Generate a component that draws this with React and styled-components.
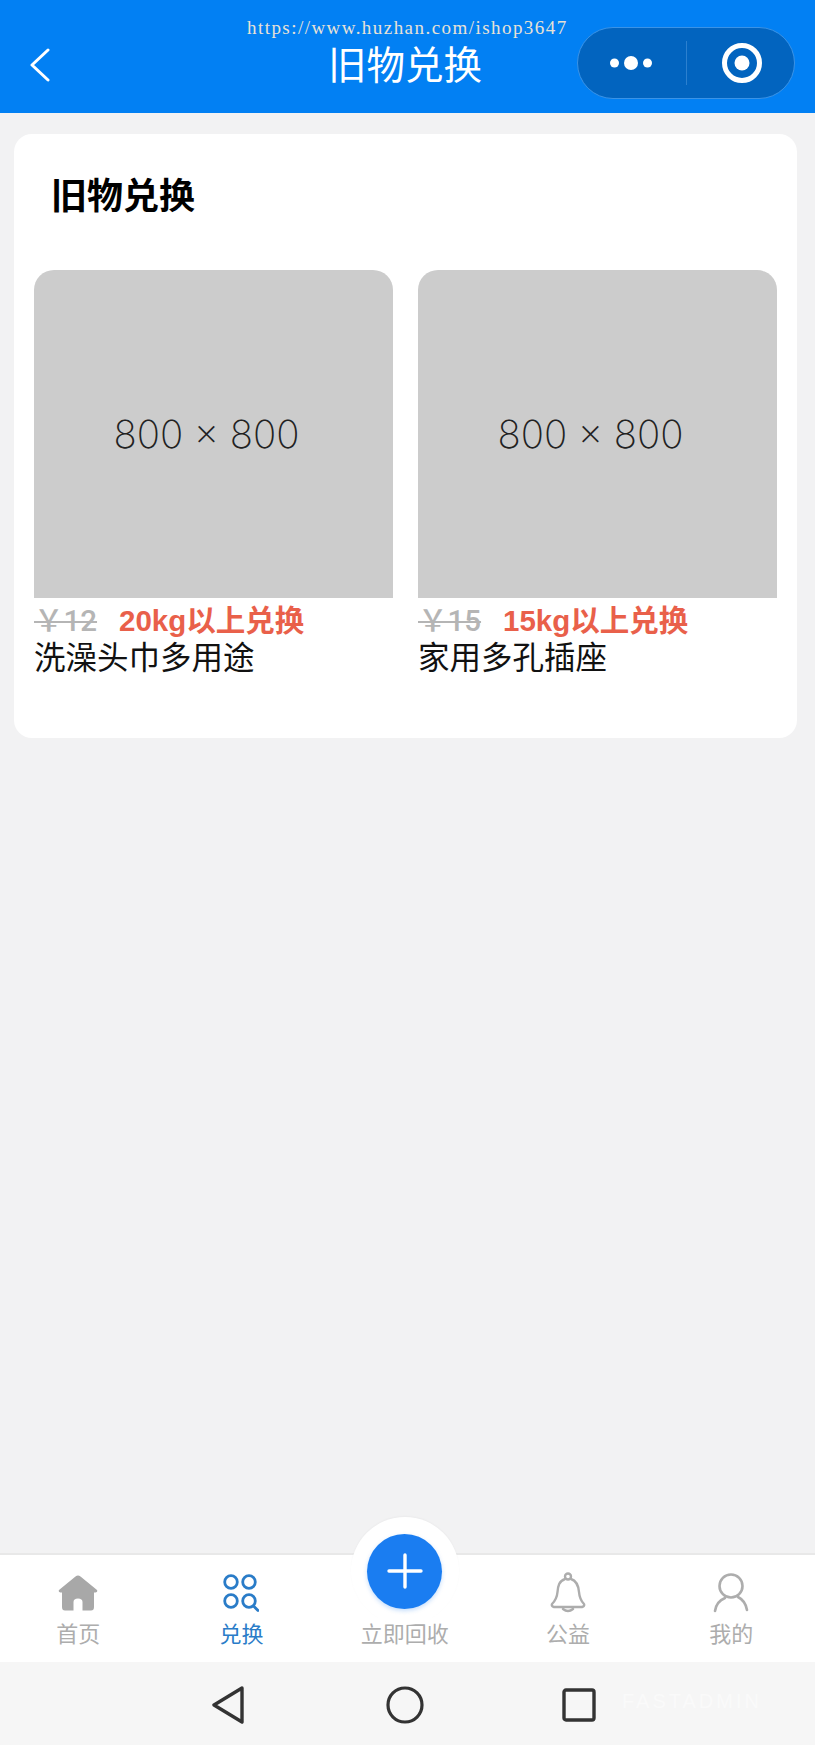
import React from "react";
import styled, { createGlobalStyle } from "styled-components";

const CJK = `"Noto Sans CJK SC", "Noto Sans", sans-serif`;

const GlobalStyle = createGlobalStyle`
  html, body {
    margin: 0;
    padding: 0;
    background: #f2f2f3;
  }
`;

const Page = styled.div`
  position: relative;
  width: 815px;
  height: 1745px;
  display: flex;
  flex-direction: column;
  overflow: hidden;
  font-family: ${CJK};
  background: #f2f2f3;
`;

const NavBar = styled.header`
  position: relative;
  flex: none;
  height: 113px;
  display: flex;
  align-items: center;
  justify-content: space-between;
  box-sizing: border-box;
  padding: 15px 20px 0 29px;
  background: #0280f3;
`;

const BackWrap = styled.div`
  display: flex;
  margin-top: 2px;
`;

const Watermark = styled.div`
  position: absolute;
  top: 17px;
  left: 247px;
  font-family: "Liberation Serif", serif;
  font-size: 19px;
  line-height: 22px;
  letter-spacing: 1.45px;
  white-space: nowrap;
  color: #e8e2d6;
`;

const NavTitle = styled.h1`
  position: absolute;
  left: 0;
  right: 5px;
  top: 40px;
  margin: 0;
  text-align: center;
  font-size: 38.5px;
  line-height: 44px;
  font-weight: 400;
  color: #fff;
`;

const Capsule = styled.div`
  width: 218px;
  height: 72px;
  margin-top: -2px;
  box-sizing: border-box;
  display: flex;
  align-items: center;
  border: 1.5px solid #3b93e6;
  border-radius: 36px;
  background: #0264bf;
`;

const CapsuleSide = styled.div`
  flex: 1;
  height: 44px;
  box-sizing: border-box;
  display: flex;
  align-items: center;
  justify-content: center;
  &:first-child {
    flex: none;
    width: 108px;
    padding-right: 3px;
  }
  & + & {
    border-left: 1.5px solid #2c80cf;
    padding-left: 3px;
  }
`;

const Main = styled.main`
  flex: 1;
  padding: 21px 18px 0 14px;
`;

const Card = styled.section`
  height: 604px;
  box-sizing: border-box;
  padding: 28px 20px 0;
  background: #fff;
  border-radius: 18px;
`;

const CardTitle = styled.h2`
  margin: 0 0 0 17px;
  height: 108px;
  font-size: 36px;
  line-height: 62px;
  font-weight: 700;
  color: #000;
`;

const Grid = styled.div`
  display: grid;
  grid-template-columns: 359px 359px;
  column-gap: 25px;
`;

const Placeholder = styled.div`
  height: 328px;
  display: flex;
  align-items: center;
  justify-content: center;
  padding-right: 14px;
  border-radius: 20px 20px 0 0;
  background: #cccccc;
  color: #222;
  font-family: Inter, "Liberation Sans", sans-serif;
  font-weight: 200;
  font-size: 38.5px;
`;

const PriceRow = styled.div`
  display: flex;
  align-items: center;
  gap: 22px;
  height: 36px;
  margin-top: 5px;
`;

const OldPrice = styled.s`
  font-family: Roboto, "Liberation Sans", ${CJK};
  font-size: 29.5px;
  line-height: 36px;
  font-weight: 500;
  color: #b5b5b5;
`;

const Points = styled.span`
  font-family: "Liberation Sans", ${CJK};
  font-size: 29.5px;
  line-height: 36px;
  font-weight: 700;
  color: #e9604a;
`;

const Name = styled.div`
  font-size: 31.5px;
  line-height: 32px;
  color: #111;
`;

const TabBar = styled.nav`
  position: relative;
  flex: none;
  height: 109px;
  box-sizing: border-box;
  display: grid;
  grid-template-columns: repeat(5, 163.3px);
  background: #fff;
  border-top: 2px solid #e8e8e8;
`;

const Tab = styled.div`
  position: relative;
  display: flex;
  flex-direction: column;
  align-items: center;
  justify-content: flex-end;
  padding: 0 7px 15px 0;
`;

const TabIcon = styled.div`
  height: 40px;
  margin-bottom: 4px;
  display: flex;
  align-items: center;
  justify-content: center;
`;

const TabLabel = styled.span`
  font-size: 22px;
  line-height: 30px;
  color: ${(p) => (p.$active ? "#2a7cc8" : "#adadad")};
`;

const FabHalo = styled.div`
  position: absolute;
  top: -38px;
  left: 50%;
  width: 108px;
  height: 108px;
  margin-left: -57.5px;
  display: flex;
  align-items: center;
  justify-content: center;
  border-radius: 50%;
  background: #fff;
  box-shadow: 0 -1px 2px rgba(0, 0, 0, 0.03);
`;

const Fab = styled.div`
  width: 75px;
  height: 75px;
  display: flex;
  align-items: center;
  justify-content: center;
  border-radius: 50%;
  background: #1a7df1;
  box-shadow: 0 2px 4px rgba(26, 125, 241, 0.25);
`;

const SystemBar = styled.div`
  position: relative;
  flex: none;
  height: 83px;
  box-sizing: border-box;
  padding: 3px 6px 0 0;
  display: flex;
  align-items: center;
  justify-content: center;
  background: #f6f6f6;
`;

const SystemSlot = styled.div`
  width: 174px;
  display: flex;
  justify-content: center;
`;

const BackTriangle = styled.svg`
  margin-right: 5px;
`;

const FaintMark = styled.span`
  position: absolute;
  left: 622px;
  top: 28px;
  font-family: "Liberation Sans", sans-serif;
  font-size: 20px;
  letter-spacing: 3px;
  color: #fafafa;
`;

const BackIcon = () => (
  <svg width="22" height="34" viewBox="0 0 22 34" fill="none">
    <path d="M19 2 L3 17 L19 32" stroke="#fff" strokeWidth="3" strokeLinecap="round" strokeLinejoin="round" />
  </svg>
);

const DotsIcon = () => (
  <svg width="42" height="16" viewBox="0 0 42 16">
    <circle cx="4.5" cy="8" r="4.5" fill="#fff" />
    <circle cx="21" cy="8" r="7" fill="#fff" />
    <circle cx="37.5" cy="8" r="4.5" fill="#fff" />
  </svg>
);

const TargetIcon = () => (
  <svg width="42" height="42" viewBox="0 0 42 42">
    <circle cx="21" cy="21" r="17.5" fill="none" stroke="#fff" strokeWidth="5" />
    <circle cx="21" cy="21" r="7.5" fill="#fff" />
  </svg>
);

const HomeIcon = () => (
  <svg width="40" height="36" viewBox="0 0 40 36">
    <path
      d="M17.5 1.5 Q20 -0.5 22.5 1.5 L39 15 Q40 17 37.5 17.5 L36 17.5 L36 32 Q36 35.5 33 35.5 L24.5 35.5 L24.5 27 Q24.5 23.5 20 23.5 Q15.5 23.5 15.5 27 L15.5 35.5 L7 35.5 Q4 35.5 4 32 L4 17.5 L2.5 17.5 Q0 17 1 15 Z"
      fill="#a8a8a8"
    />
  </svg>
);

const ExchangeIcon = () => (
  <svg width="36" height="38" viewBox="0 0 36 38" fill="none" stroke="#2a7cc8" strokeWidth="2.8">
    <circle cx="8" cy="8" r="6.3" />
    <circle cx="26" cy="8" r="6.3" />
    <circle cx="8" cy="27" r="6.3" />
    <circle cx="26" cy="27" r="6.3" />
    <path d="M30.5 32 L35 36.5" strokeLinecap="round" />
  </svg>
);

const BellIcon = () => (
  <svg width="36" height="42" viewBox="0 0 36 42" fill="none" stroke="#adadad" strokeWidth="2.4" strokeLinejoin="round" strokeLinecap="round">
    <circle cx="18" cy="4.5" r="3" />
    <path d="M15 7 C9 9 8 14 7.5 20 C7 26 5 29 2 32 Q1 34 4 35 L32 35 Q35 34 34 32 C31 29 29.5 26 29 20 C28.5 14 27 9 21 7" />
    <path d="M13 37 Q18 41 23 37" />
  </svg>
);

const UserIcon = () => (
  <svg width="36" height="40" viewBox="0 0 36 40" fill="none" stroke="#adadad" strokeWidth="2.6" strokeLinecap="round">
    <circle cx="18" cy="13" r="11.5" />
    <path d="M2 38 C3 31 7 27 12 25" />
    <path d="M25 24 C29 26 33 31 34 37" />
  </svg>
);

const PlusIcon = () => (
  <svg width="36" height="36" viewBox="0 0 36 36">
    <path d="M18 2 V34 M2 18 H34" stroke="#fff" strokeWidth="3.4" strokeLinecap="round" />
  </svg>
);

const goods = [
  { id: 1, price: "\uFFE512", points: "20kg以上兑换", name: "洗澡头巾多用途" },
  { id: 2, price: "\uFFE515", points: "15kg以上兑换", name: "家用多孔插座" },
];

const tabs = [
  { label: "首页", icon: <HomeIcon /> },
  { label: "兑换", icon: <ExchangeIcon />, active: true },
  { label: "立即回收", fab: true },
  { label: "公益", icon: <BellIcon /> },
  { label: "我的", icon: <UserIcon /> },
];

export default function App() {
  return (
    <Page>
      <GlobalStyle />
      <NavBar>
        <BackWrap>
          <BackIcon />
        </BackWrap>
        <NavTitle>旧物兑换</NavTitle>
        <Watermark>https://www.huzhan.com/ishop3647</Watermark>
        <Capsule>
          <CapsuleSide>
            <DotsIcon />
          </CapsuleSide>
          <CapsuleSide>
            <TargetIcon />
          </CapsuleSide>
        </Capsule>
      </NavBar>

      <Main>
        <Card>
          <CardTitle>旧物兑换</CardTitle>
          <Grid>
            {goods.map((item) => (
              <div key={item.id}>
                <Placeholder>800 × 800</Placeholder>
                <PriceRow>
                  <OldPrice>{item.price}</OldPrice>
                  <Points>{item.points}</Points>
                </PriceRow>
                <Name>{item.name}</Name>
              </div>
            ))}
          </Grid>
        </Card>
      </Main>

      <TabBar>
        {tabs.map((tab) => (
          <Tab key={tab.label}>
            {tab.fab ? (
              <FabHalo>
                <Fab>
                  <PlusIcon />
                </Fab>
              </FabHalo>
            ) : (
              <TabIcon>{tab.icon}</TabIcon>
            )}
            <TabLabel $active={tab.active}>{tab.label}</TabLabel>
          </Tab>
        ))}
      </TabBar>

      <SystemBar>
        <SystemSlot>
          <BackTriangle width="34" height="38" viewBox="0 0 34 38" fill="none" stroke="#333" strokeWidth="3.4" strokeLinejoin="round">
            <path d="M31 2 L3 19 L31 36 Z" />
          </BackTriangle>
        </SystemSlot>
        <SystemSlot>
          <svg width="38" height="38" viewBox="0 0 38 38" fill="none" stroke="#333" strokeWidth="3.2">
            <circle cx="19" cy="19" r="17" />
          </svg>
        </SystemSlot>
        <SystemSlot>
          <svg width="34" height="34" viewBox="0 0 34 34" fill="none" stroke="#333" strokeWidth="3.4" strokeLinejoin="round">
            <rect x="2" y="2" width="30" height="30" rx="2" />
          </svg>
        </SystemSlot>
        <FaintMark>FASTADMIN</FaintMark>
      </SystemBar>
    </Page>
  );
}
